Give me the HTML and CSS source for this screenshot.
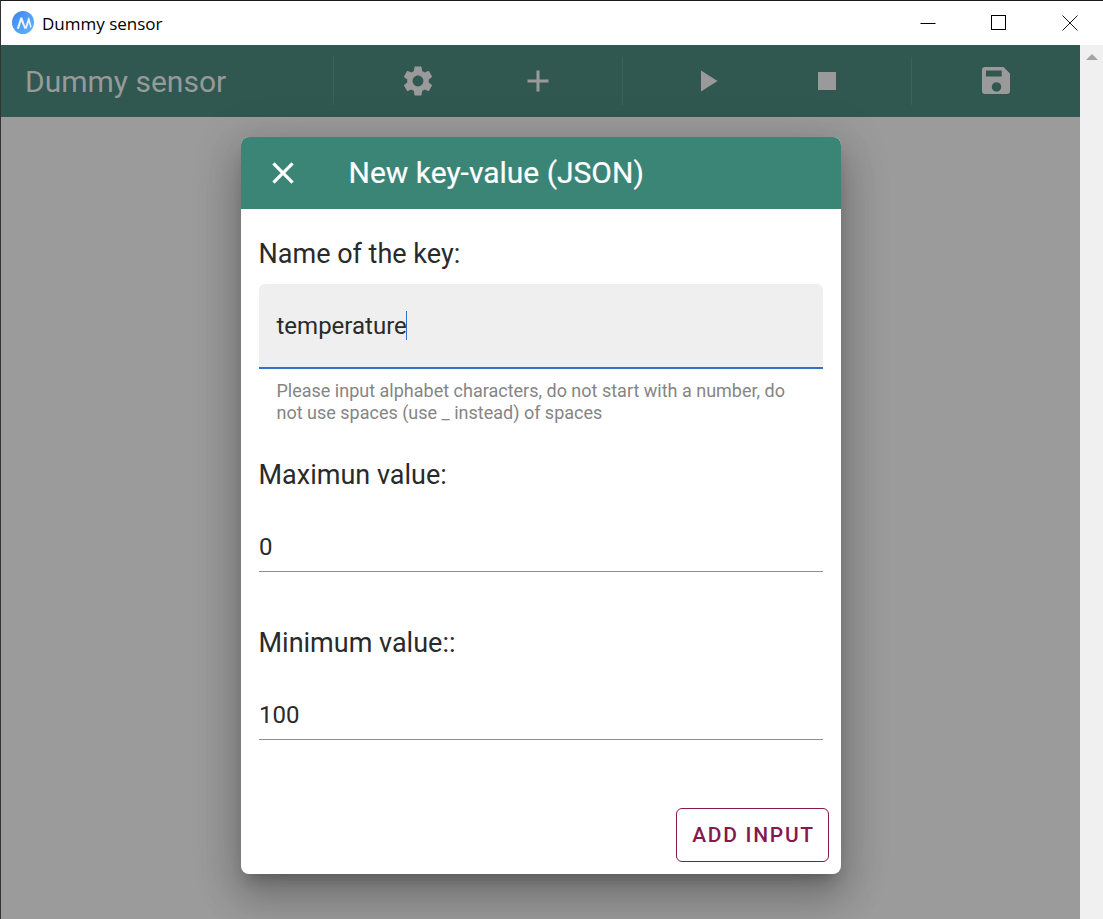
FILE: index.html
```html
<!DOCTYPE html>
<html lang="en">
<head>
<meta charset="utf-8">
<title>Dummy sensor</title>
<link rel="stylesheet" href="styles.css">
</head>
<body>
<div class="window">
  <header class="titlebar">
    <svg class="app-logo" viewBox="0 0 22 23" width="22" height="23" aria-hidden="true">
      <defs><linearGradient id="lg" x1="0" y1="0" x2="1" y2="1"><stop offset="0" stop-color="#3d82ee"/><stop offset="1" stop-color="#62b8ff"/></linearGradient></defs>
      <ellipse cx="11" cy="11.5" rx="11" ry="11.5" fill="url(#lg)"/>
      <path d="M4.8 17.8 L8.4 6.4 H10.2 L13.4 15.4 L16.4 6.4 H17.2 L19.6 15.8 L18.4 17 L16.8 11.6 L14.6 17.8 H12.4 L9.3 10.6 L7 17.8z" fill="#eef5ff"/>
    </svg>
    <span class="app-title">Dummy sensor</span>
    <div class="win-controls">
      <svg class="win-btn" width="16" height="16" viewBox="0 0 16 16"><path d="M0.5 8.5H15.5" stroke="#000" fill="none"/></svg>
      <svg class="win-btn" width="16" height="16" viewBox="0 0 16 16"><rect x="0.5" y="0.5" width="14" height="14" stroke="#000" fill="none"/></svg>
      <svg class="win-btn" width="16" height="16" viewBox="0 0 16 16"><path d="M0.5 0.5L15.5 15.5M15.5 0.5L0.5 15.5" stroke="#000" stroke-width="0.9" fill="none"/></svg>
    </div>
  </header>
  <div class="client">
    <main class="page">
      <nav class="toolbar">
        <div class="tb-section tb-brand">Dummy sensor</div>
        <div class="tb-section tb-icons">
          <svg class="tb-icon" width="36" height="36" viewBox="0 0 24 24"><path d="M19.14 12.94c.04-.3.06-.61.06-.94 0-.32-.02-.64-.07-.94l2.03-1.58c.18-.14.23-.41.12-.61l-1.92-3.32c-.12-.22-.37-.29-.59-.22l-2.39.96c-.5-.38-1.03-.7-1.62-.94l-.36-2.54c-.04-.24-.24-.41-.48-.41h-3.84c-.24 0-.43.17-.47.41l-.36 2.54c-.59.24-1.13.57-1.62.94l-2.39-.96c-.22-.08-.47 0-.59.22L2.74 8.87c-.12.21-.08.47.12.61l2.03 1.58c-.05.3-.09.63-.09.94s.02.64.07.94l-2.03 1.58c-.18.14-.23.41-.12.61l1.92 3.32c.12.22.37.29.59.22l2.39-.96c.5.38 1.03.7 1.62.94l.36 2.54c.05.24.24.41.48.41h3.84c.24 0 .44-.17.47-.41l.36-2.54c.59-.24 1.13-.56 1.62-.94l2.39.96c.22.08.47 0 .59-.22l1.92-3.32c.12-.22.07-.47-.12-.61l-2.01-1.58zM12 15.6c-1.98 0-3.6-1.62-3.6-3.6s1.62-3.6 3.6-3.6 3.6 1.62 3.6 3.6-1.62 3.6-3.6 3.6z"/></svg>
          <svg class="tb-icon" width="36" height="36" viewBox="0 0 24 24"><path d="M19 13h-6v6h-2v-6H5v-2h6V5h2v6h6v2z"/></svg>
        </div>
        <div class="tb-section tb-icons">
          <svg class="tb-icon" width="36" height="36" viewBox="0 0 24 24"><path d="M8 5v14l11-7z"/></svg>
          <svg class="tb-icon" width="36" height="36" viewBox="0 0 24 24"><path d="M6 6h12v12H6z"/></svg>
        </div>
        <div class="tb-section tb-last">
          <svg class="tb-icon save-icon" width="28" height="27" viewBox="0 0 28 27"><path fill-rule="evenodd" d="M3 0H21.5L28 6.5V24a3 3 0 0 1-3 3H3a3 3 0 0 1-3-3V3a3 3 0 0 1 3-3zM4 3.5V9.5H19.7V3.5zM14.5 15.2a4.7 4.7 0 1 0 .01 0z"/></svg>
        </div>
      </nav>
      <div class="scrim">
        <section class="dialog">
          <div class="dialog-head">
            <svg class="close-icon" width="36" height="36" viewBox="0 0 24 24"><path d="M19 6.41L17.59 5 12 10.59 6.41 5 5 6.41 10.59 12 5 17.59 6.41 19 12 13.41 17.59 19 19 17.59 13.41 12z"/></svg>
            <h2 class="dialog-title">New key-value (JSON)</h2>
          </div>
          <div class="dialog-body">
            <div class="field-label">Name of the key:</div>
            <div class="filled-input"><span class="value">temperature</span><span class="caret"></span></div>
            <div class="hint">Please input alphabet characters, do not start with a number, do not use spaces (use _ instead) of spaces</div>
            <div class="field-label second">Maximun value:</div>
            <div class="line-input">0</div>
            <div class="field-label third">Minimum value::</div>
            <div class="line-input">100</div>
            <div class="actions"><button class="add-btn" type="button">ADD INPUT</button></div>
          </div>
        </section>
      </div>
    </main>
    <aside class="scrollbar"><span class="scroll-arrow"></span></aside>
  </div>
</div>
</body>
</html>
```

FILE: styles.css
```css
* { box-sizing: border-box; }
html, body { margin: 0; height: 100%; overflow: hidden; }
body { font-family: Roboto, "Liberation Sans", sans-serif; color: #2a2a2a; background: #fff; }

.window {
  width: 1103px; height: 919px;
  display: flex; flex-direction: column;
  border-top: 1px solid #1c1c1c;
  border-left: 1px solid #333;
}

.titlebar {
  height: 44px; flex: none;
  display: flex; align-items: center;
  padding-left: 11px;
  background: #fff;
}
.app-logo { flex: none; margin-top: -1px; }
.app-title {
  margin-left: 8px; margin-top: 1px;
  font-family: "Open Sans", "Noto Sans", sans-serif;
  font-size: 17px; color: #000;
}
.win-controls { margin-left: auto; display: flex; align-items: center; gap: 55px; padding-right: 25px; margin-top: -1px; }
.win-btn { display: block; }

.client { flex: 1; display: flex; min-height: 0; }
.page { position: relative; flex: 1; min-width: 0; display: flex; flex-direction: column; background: #fff; }
.scrollbar { width: 23px; flex: none; background: #f0f0f0; padding: 9px 0 0 6px; }
.scroll-arrow {
  display: block; width: 0; height: 0;
  border-left: 6px solid transparent; border-right: 6px solid transparent;
  border-bottom: 6px solid #a3a3a3;
}

.toolbar {
  height: 72px; flex: none;
  display: grid; grid-template-columns: 333px 289px 289px 1fr;
  align-items: center;
  background: #305850;
}
.tb-section { height: 48px; display: flex; align-items: center; border-right: 1px solid #3b6359; }
.tb-brand { padding-left: 24px; font-size: 30px; color: #969a98; }
.tb-icons { justify-content: space-around; padding: 0 24px; }
.tb-last { justify-content: center; border-right: 0; }
.tb-icon { fill: #9a9a9a; display: block; }
.save-icon { margin-top: -1px; }

.scrim {
  position: absolute; left: 0; right: 0; top: 72px; bottom: 0;
  background: #9b9b9b;
  padding: 20px 0 0 240px;
}
.dialog {
  width: 600px; height: 737px;
  display: flex; flex-direction: column;
  background: #fff; border-radius: 8px; overflow: hidden;
  box-shadow: 0 11px 15px -7px rgba(0,0,0,.24), 0 24px 38px 3px rgba(0,0,0,.17), 0 9px 46px 8px rgba(0,0,0,.14);
}
.dialog-head {
  height: 72px; flex: none;
  display: flex; align-items: center;
  padding-left: 24px;
  background: #3b8577; color: #fff;
}
.close-icon { fill: #fff; stroke: #fff; stroke-width: .25; flex: none; margin-left: -.5px; }
.dialog-title { margin: 0 0 0 48px; font-size: 30px; font-weight: 400; line-height: 1; -webkit-text-stroke: .2px #fff; }

.dialog-body { flex: 1; display: flex; flex-direction: column; padding: 0 18px; }
.field-label { font-size: 27px; line-height: 36px; color: #2a2a2a; margin-top: 27px; margin-left: -.5px; }
.second { margin-top: 33px; }
.third { margin-top: 53px; }

.filled-input {
  height: 85px; margin-top: 12px;
  display: flex; align-items: center;
  padding: 0 18px 0 17.5px;
  background: #efefef;
  border-radius: 6px 6px 0 0;
  border-bottom: 2px solid #3371c9;
  font-size: 24px;
}
.caret { width: 1px; height: 29px; background: #3371c9; margin-left: -.5px; }
.hint {
  margin-top: 11px; padding: 0 18px 0 17.5px;
  font-size: 18px; line-height: 22px; color: #858585;
}
.line-input {
  height: 61px; margin-top: 18px;
  display: flex; align-items: flex-end;
  padding-bottom: 10px;
  line-height: 28px;
  border-bottom: 1px solid #8e8e8e;
  font-size: 24px; color: #2a2a2a;
}
.actions { margin-top: auto; padding: 0 0 12px; display: flex; justify-content: flex-end; margin-right: -6px; }
.add-btn {
  height: 54px; width: 153px;
  background: #fff; color: #84194f;
  border: 1px solid #84194f; border-radius: 6px;
  font-family: Roboto, sans-serif; font-size: 21px; font-weight: 500; letter-spacing: 1.7px;
  padding: 0 0 0 2px;
}
```
